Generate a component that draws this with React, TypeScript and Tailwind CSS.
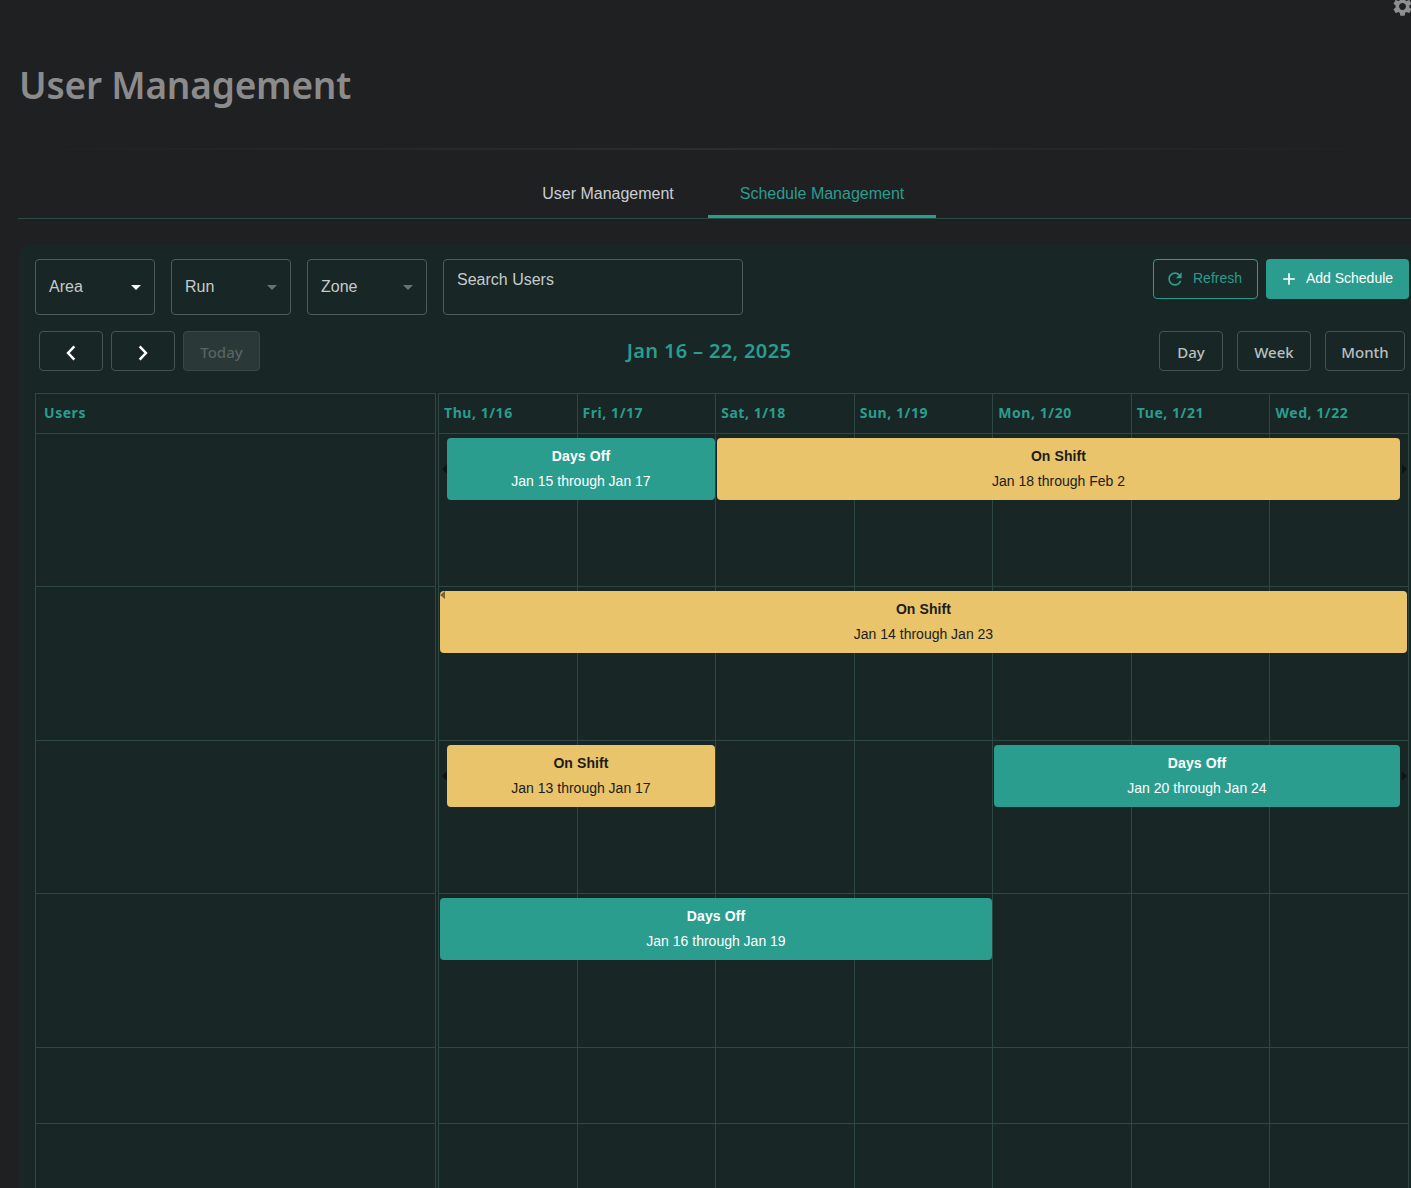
import React from "react";

const plex = "font-['Noto_Sans',sans-serif]";
const arial = "font-['Liberation_Sans',Arial,sans-serif]";

function Gear() {
  return (
    <svg viewBox="0 0 24 24" className="h-[23px] w-[23px] fill-[#8f8f8f]">
      <path d="M19.14 12.94c.04-.3.06-.61.06-.94 0-.32-.02-.64-.07-.94l2.03-1.58a.49.49 0 0 0 .12-.61l-1.92-3.32a.488.488 0 0 0-.59-.22l-2.39.96c-.5-.38-1.03-.7-1.62-.94l-.36-2.54a.484.484 0 0 0-.48-.41h-3.84c-.24 0-.43.17-.47.41l-.36 2.54c-.59.24-1.13.57-1.62.94l-2.39-.96c-.22-.08-.47 0-.59.22L2.74 8.87c-.12.21-.08.47.12.61l2.03 1.58c-.05.3-.09.63-.09.94s.02.64.07.94l-2.03 1.58a.49.49 0 0 0-.12.61l1.92 3.32c.12.22.37.29.59.22l2.39-.96c.5.38 1.03.7 1.62.94l.36 2.54c.05.24.24.41.48.41h3.84c.24 0 .44-.17.47-.41l.36-2.54c.59-.24 1.13-.56 1.62-.94l2.39.96c.22.08.47 0 .59-.22l1.92-3.32c.12-.22.07-.47-.12-.61l-2.01-1.58zM12 15.6c-1.98 0-3.6-1.62-3.6-3.6s1.62-3.6 3.6-3.6 3.6 1.62 3.6 3.6-1.62 3.6-3.6 3.6z" />
    </svg>
  );
}

function Select({ label, active }: { label: string; active?: boolean }) {
  return (
    <div className="flex h-[56px] w-[120px] items-center justify-between rounded border border-[#4d5b59] pl-[13px] pr-[13px]">
      <span className="pb-[1px] text-[16px] text-[#c5cccc]">{label}</span>
      {active ? (
        <span className="h-0 w-0 border-x-[5px] border-t-[5px] border-x-transparent border-t-white" />
      ) : (
        <span className="h-0 w-0 border-x-[5px] border-t-[5px] border-x-transparent border-t-[#6b7371]" />
      )}
    </div>
  );
}

function NavButton({ dir }: { dir: "left" | "right" }) {
  return (
    <button className="flex h-[40px] w-[64px] items-center justify-center rounded border border-[#46534f] pt-[3px]">
      <svg viewBox="0 0 24 24" className="h-[20px] w-[20px] fill-none stroke-white stroke-[3]">
        {dir === "left" ? <path d="M16 4l-7.5 8 7.5 8" /> : <path d="M8 4l7.5 8-7.5 8" />}
      </svg>
    </button>
  );
}

function ViewButton({ label, width }: { label: string; width: string }) {
  return (
    <button className={`h-[40px] rounded border border-[#46534f] pt-[2px] text-[15px] font-medium text-[#b9c0c0] ${plex} ${width}`}>
      {label}
    </button>
  );
}

const days = ["Thu, 1/16", "Fri, 1/17", "Sat, 1/18", "Sun, 1/19", "Mon, 1/20", "Tue, 1/21", "Wed, 1/22"];

function DayCells() {
  return (
    <>
      {days.map((d) => (
        <div key={d} className="border-r border-t border-[#2d4744]" />
      ))}
    </>
  );
}

function Ev({
  kind,
  title,
  dates,
  pos,
}: {
  kind: "teal" | "gold";
  title: string;
  dates: string;
  pos: string;
}) {
  const tone = kind === "teal" ? "bg-[#2a9d8f] text-white" : "bg-[#e9c46a] text-[#1c1c1c]";
  return (
    <div className={`absolute top-[5px] flex h-[62px] flex-col items-center rounded-[4px] pt-[9px] ${arial} ${tone} ${pos}`}>
      <span className="text-[14px] font-bold leading-[18px] tracking-[0.1px]">{title}</span>
      <span className="mt-[7px] text-[14px] leading-[18px]">{dates}</span>
    </div>
  );
}

function ArrowL({ top = "top-[31px]" }: { top?: string }) {
  return <span className={`absolute left-[3px] h-0 w-0 border-y-[5px] border-r-[5px] border-y-transparent border-r-[#0f1413] ${top}`} />;
}

function ArrowR() {
  return <span className="absolute left-[963px] top-[31px] h-0 w-0 border-y-[5px] border-l-[5px] border-y-transparent border-l-[#0f1413]" />;
}

function Row({ height, children }: { height: string; children?: React.ReactNode }) {
  return (
    <div className={`flex ${height}`}>
      <div className="w-[401px] border-x border-t border-[#2d4744]" />
      <div className="relative ml-[2px] grid w-[971px] grid-cols-7 border-l border-[#2d4744]">
        <DayCells />
        {children}
      </div>
    </div>
  );
}

export default function App() {
  return (
    <div className={`h-[1188px] w-[1411px] overflow-hidden bg-[#1f2022] ${arial}`}>
      <div className="flex h-[40px] justify-end">
        <div className="-mr-[3px] -mt-[5px]">
          <Gear />
        </div>
      </div>

      <h1 className={`ml-[19px] mt-[20px] text-[37px] font-semibold leading-[50px] tracking-[-0.2px] text-[#8b8b8b] ${plex}`}>
        User Management
      </h1>

      <div className="mt-[38px] h-[2px] bg-gradient-to-r from-transparent via-[#2c2d2f] to-transparent" />

      <div className="ml-[18px] mt-[18px] flex h-[51px] border-b border-[#2b4a44] pl-[491px]">
        <div className="flex w-[198px] items-center justify-center pt-[2px] text-[16px] tracking-[-0.01px] text-[#c9ced6]">User Management</div>
        <div className="ml-[1px] flex w-[228px] items-center justify-center border-b-[3px] border-[#2a9d8f] pt-[5px] text-[16px] text-[#2a9d8f]">
          Schedule Management
        </div>
      </div>

      <div className="ml-[19px] mt-[25px] rounded-l-[12px] bg-[#182625] pl-[16px] pt-[15px]">
        <div className="flex h-[56px] items-start gap-[16px]">
          <Select label="Area" active />
          <Select label="Run" />
          <Select label="Zone" />
          <div className="flex h-[56px] w-[300px] items-start rounded border border-[#4d5b59] px-[13px] pt-[8px] text-[16px] text-[#c5cccc]">
            Search Users
          </div>
          <div className="ml-auto mr-[2px] flex gap-[8px]">
            <button className="flex h-[40px] w-[105px] items-center justify-center gap-[8px] rounded border border-[#2a9d8f] pb-[2px] pr-[4px] text-[14px] text-[#2a9d8f]">
              <svg viewBox="0 0 24 24" className="mt-[2px] h-[20px] w-[20px] fill-[#2a9d8f]">
                <path d="M17.65 6.35C16.2 4.9 14.21 4 12 4c-4.42 0-7.99 3.58-7.99 8s3.57 8 7.99 8c3.73 0 6.84-2.55 7.73-6h-2.08c-.82 2.33-3.04 4-5.65 4-3.31 0-6-2.69-6-6s2.69-6 6-6c1.66 0 3.14.69 4.22 1.78L13 11h7V4l-2.35 2.35z" />
              </svg>
              Refresh
            </button>
            <button className="flex h-[40px] w-[143px] items-center justify-center gap-[7px] rounded bg-[#2a9d8f] pb-[2px] pr-[3px] text-[14px] text-white">
              <svg viewBox="0 0 24 24" className="mt-[2px] h-[20px] w-[20px] fill-white">
                <path d="M19 13h-6v6h-2v-6H5v-2h6V5h2v6h6v2z" />
              </svg>
              Add Schedule
            </button>
          </div>
        </div>

        <div className="mt-[16px] flex h-[40px] items-center">
          <div className="ml-[4px] flex gap-[8px]">
            <NavButton dir="left" />
            <NavButton dir="right" />
            <button className={`h-[40px] w-[77px] rounded border border-[#394745] bg-[#2a3837] pt-[2px] text-[15px] font-medium text-[#586463] ${plex}`}>
              Today
            </button>
          </div>
          <div className={`ml-[361px] w-[176px] whitespace-nowrap pb-[1px] text-center text-[20px] font-semibold tracking-[0.35px] text-[#2a9d8f] ${plex}`}>
            Jan 16 – 22, 2025
          </div>
          <div className="ml-auto mr-[6px] flex gap-[14px]">
            <ViewButton label="Day" width="w-[64px]" />
            <ViewButton label="Week" width="w-[74px]" />
            <ViewButton label="Month" width="w-[80px]" />
          </div>
        </div>

        <div className="mt-[22px]">
          <div className={`flex h-[40px] pb-[2px] text-[14px] font-bold tracking-[0.55px] text-[#2a9d8f] ${plex}`}>
            <div className="-mb-[2px] flex w-[401px] items-center border-x border-t border-[#2d4744] pb-[2px] pl-[8px]">Users</div>
            <div className="-mb-[2px] ml-[2px] grid w-[971px] grid-cols-7 border-l border-[#2d4744]">
              {days.map((d) => (
                <div key={d} className="flex items-center whitespace-nowrap border-r border-t border-[#2d4744] pb-[2px] pl-[5px]">
                  {d}
                </div>
              ))}
            </div>
          </div>

          <Row height="h-[153px]">
            <ArrowL />
            <Ev kind="teal" title="Days Off" dates="Jan 15 through Jan 17" pos="left-[8px] w-[268px]" />
            <Ev kind="gold" title="On Shift" dates="Jan 18 through Feb 2" pos="left-[278px] w-[683px]" />
            <ArrowR />
          </Row>
          <Row height="h-[154px]">
            <Ev kind="gold" title="On Shift" dates="Jan 14 through Jan 23" pos="left-[1px] w-[967px]" />
            <span className="absolute left-[1px] top-[5px] h-0 w-0 border-y-[4px] border-r-[5px] border-y-transparent border-r-[#7b6433]" />
          </Row>
          <Row height="h-[153px]">
            <ArrowL />
            <Ev kind="gold" title="On Shift" dates="Jan 13 through Jan 17" pos="left-[8px] w-[268px]" />
            <Ev kind="teal" title="Days Off" dates="Jan 20 through Jan 24" pos="left-[555px] w-[406px]" />
            <ArrowR />
          </Row>
          <Row height="h-[154px]">
            <Ev kind="teal" title="Days Off" dates="Jan 16 through Jan 19" pos="left-[1px] w-[552px]" />
          </Row>
          <Row height="h-[76px]" />
          <Row height="h-[100px]" />
        </div>
      </div>
    </div>
  );
}
